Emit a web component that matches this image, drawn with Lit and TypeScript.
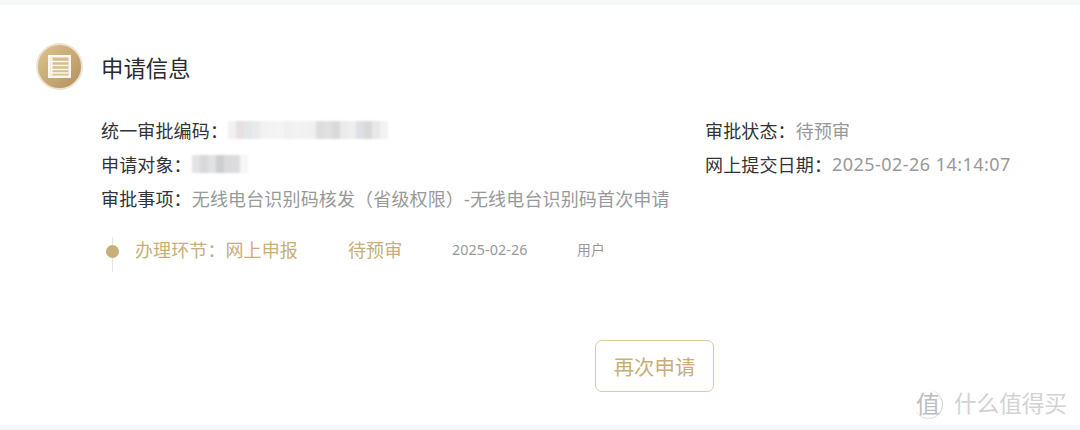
import { LitElement, html, css } from "lit";
import { customElement } from "lit/decorators.js";

const mosaicA = [
  "#f1f1f1","#e6e1df","#e4e6e9","#e8eaec","#f2f2f2","#f3f3f3","#f4f4f4","#f0f0f0","#f2f2f2","#f1f1f1",
  "#f0f0f0","#dfdddc","#e0e0e0","#d8d9dc","#ebebec","#eeeeee","#dcdfe4","#d9d8d6","#e8e8e9","#f2f2f2",
];
const mosaicB = ["#e3e3e6","#d8d8dc","#e2e2e4","#ccced2","#dbdbde","#dcdcde","#f6f6f6"];

@customElement("app-root")
export class AppRoot extends LitElement {
  static styles = css`
    :host {
      display: block;
      width: 1080px;
      height: 430px;
      overflow: hidden;
      background: #fff;
      font-family: "Noto Sans", "Noto Sans CJK SC", sans-serif;
      position: relative;
    }
    .page {
      height: 430px;
      box-sizing: border-box;
      display: flex;
      flex-direction: column;
      border-top: 5px solid #f7f8fa;
      border-bottom: 5px solid #f5f8fb;
      padding: 38px 0 0 36px;
    }
    .head { display: flex; align-items: center; gap: 18px; height: 47px; }
    .badge {
      width: 47px;
      height: 47px;
      box-sizing: border-box;
      border-radius: 50%;
      border: 2px solid #ece3d1;
      background: linear-gradient(135deg, #dcc48f, #b3915f);
      display: flex;
      align-items: center;
      justify-content: center;
    }
    .title { font-size: 22.4px; color: #2b2b2f; line-height: 51px; height: 47px; }
    .info {
      margin: 23px 0 0 65px;
      display: grid;
      grid-template-columns: 604px auto;
      grid-auto-rows: 34px;
      font-size: 18px;
      letter-spacing: 0.15px;
      color: #333338;
      white-space: nowrap;
    }
    .row { display: flex; align-items: center; height: 34px; }
    .val { color: #999; }
    .stamp { letter-spacing: 0.46px; }
    .mosaic { display: flex; filter: blur(1px); }
    .mosaic i { display: block; width: 8px; height: 18px; }
    .span2 { grid-column: 1 / span 2; }
    .trace {
      margin: 22px 0 0 69px;
      height: 35px;
      display: flex;
      align-items: flex-start;
      color: #c8ae78;
      font-size: 18px;
      line-height: 26px;
      letter-spacing: 0.1px;
      white-space: nowrap;
    }
    .axis {
      width: 14px;
      height: 35px;
      margin-right: 16px;
      display: flex;
      justify-content: center;
      align-items: flex-start;
      position: relative;
      flex: none;
    }
    .axis::before {
      content: "";
      position: absolute;
      left: 6.5px;
      top: 0;
      bottom: 0;
      width: 1px;
      background: #e4e4e4;
    }
    .dot { width: 13px; height: 13px; margin-top: 8px; border-radius: 50%; background: #c8ae78; position: relative; }
    .step { width: 213px; }
    .state { width: 104px; }
    .date { width: 125px; font-size: 14.3px; color: #999; }
    .user { font-size: 13.8px; color: #999; }
    .actions { display: flex; margin: 68px 0 0 559px; }
    .btn {
      width: 119px;
      height: 52px;
      box-sizing: border-box;
      border: 1px solid #dcc99f;
      border-radius: 7px;
      background: #fff;
      color: #c8ae78;
      font: inherit;
      font-size: 20.4px;
      padding: 0;
    }
    .mark {
      position: absolute;
      left: 914px;
      top: 389px;
      display: flex;
      align-items: center;
      gap: 11px;
      color: #d2d2d2;
      font-size: 22.6px;
      line-height: 30px;
      white-space: nowrap;
    }
    .seal {
      width: 29px;
      height: 29px;
      box-sizing: border-box;
      border-radius: 50%;
      border-right: 1.5px solid #d0d0d0;
      border-bottom: 1.5px solid #e0e0e0;
      display: flex;
      align-items: center;
      justify-content: center;
      font-size: 24px;
      color: #bdbdbd;
    }
  `;

  render() {
    return html`
      <div class="page">
        <div class="head">
          <div class="badge">
            <svg width="23" height="23" viewBox="0 0 23 23">
              <rect x="0" y="0" width="23" height="23" fill="#fbf7ef"></rect>
              <rect x="2.5" y="2.5" width="18" height="18" fill="#d6bd8e"></rect>
              <path d="M2.5 6.5h18M2.5 10.5h18M2.5 14.5h18M2.5 18h18" stroke="#fbf7ef" stroke-width="1.6"></path>
              <path d="M3.5 2.5v18" stroke="#fbf7ef" stroke-width="2"></path>
            </svg>
          </div>
          <div class="title">申请信息</div>
        </div>
        <div class="info">
          <div class="row">统一审批编码：<span class="mosaic">${mosaicA.map((c) => html`<i style="background:${c}"></i>`)}</span></div>
          <div class="row">审批状态：<span class="val">待预审</span></div>
          <div class="row">申请对象：<span class="mosaic">${mosaicB.map((c) => html`<i style="background:${c}"></i>`)}</span></div>
          <div class="row">网上提交日期：<span class="val stamp">2025-02-26 14:14:07</span></div>
          <div class="row span2">审批事项：<span class="val">无线电台识别码核发（省级权限）-无线电台识别码首次申请</span></div>
        </div>
        <div class="trace">
          <div class="axis"><div class="dot"></div></div>
          <div class="step">办理环节：网上申报</div>
          <div class="state">待预审</div>
          <div class="date">2025-02-26</div>
          <div class="user">用户</div>
        </div>
        <div class="actions"><button class="btn">再次申请</button></div>
      </div>
      <div class="mark"><span class="seal">值</span><span>什么值得买</span></div>
    `;
  }
}
